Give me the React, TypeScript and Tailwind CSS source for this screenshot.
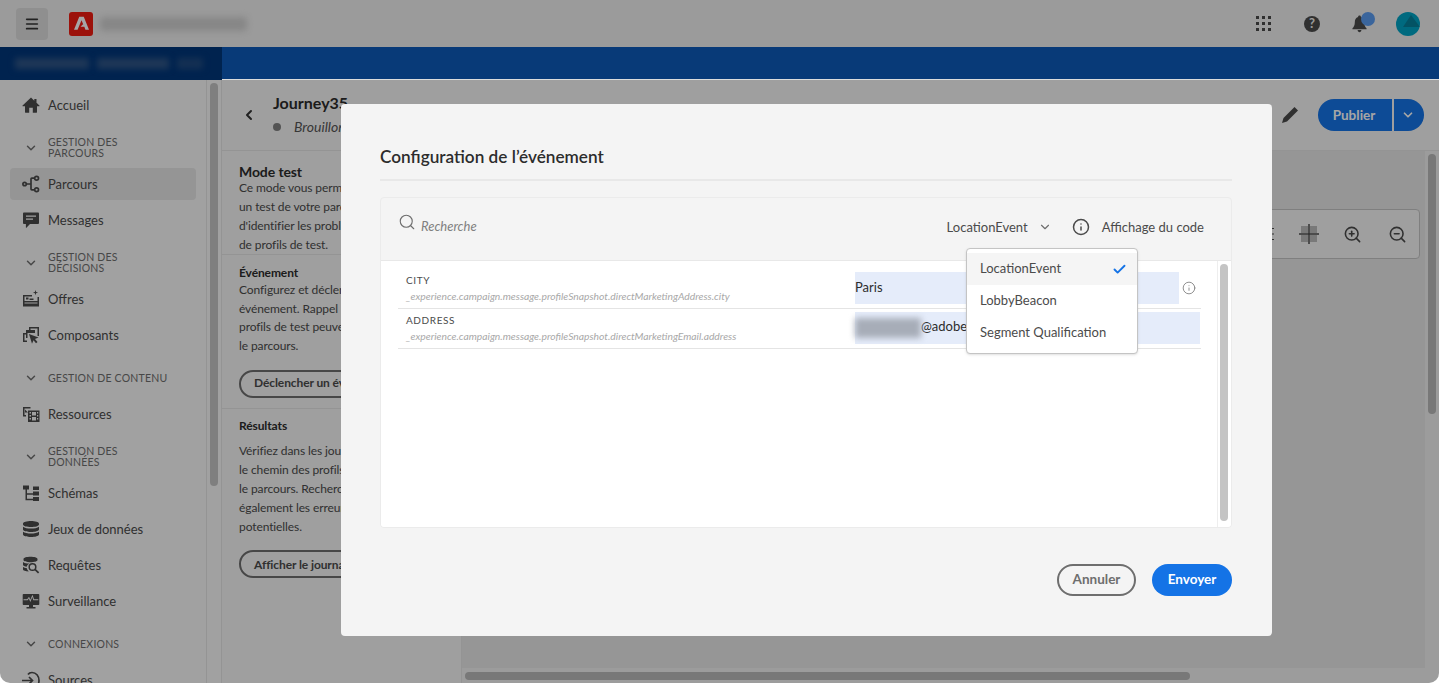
import React from 'react';
import { Check, ChevronDown, ChevronLeft, Info, Menu, Search, ZoomIn, ZoomOut } from 'lucide-react';

const I = ({ d, className = 'w-[18px] h-[18px]' }: { d: React.ReactNode; className?: string }) => (
  <svg viewBox="0 0 18 18" className={className} fill="currentColor">
    {d}
  </svg>
);

const icons: Record<string, React.ReactNode> = {
  home: <path d="M9 1.5 0.6 9.4c-.3.3-.1.8.3.8H3v6c0 .3.2.5.5.5h3.7v-5h3.6v5h3.7c.3 0 .5-.2.5-.5v-6h2.1c.4 0 .6-.5.3-.8L14.5 6.8V3h-2.2v1.7z" />,
  journey: (
    <g fill="none" stroke="currentColor" strokeWidth="1.7">
      <circle cx="2.6" cy="9" r="1.7" />
      <circle cx="14.6" cy="3.2" r="1.9" />
      <circle cx="14.6" cy="14.8" r="1.9" />
      <path d="M4.5 9h4.5M12.6 3.2H9.8c-.5 0-.8.3-.8.8v10c0 .5.3.8.8.8h2.8" />
    </g>
  ),
  message: <path d="M2 1.5h14c.5 0 1 .5 1 1V12c0 .5-.5 1-1 1H8l-3.600 3.800c-.2.2-.5 0-.5-.2V13H2c-.5 0-1-.5-1-1V2.500c0-.5.5-1 1-1zM4 4.500v1.300h10V4.500zM4 7.500v1.300h7V7.500z" fillRule="evenodd" />,
  offers: <path d="M13.500 0l.6 2 2 .6-2 .6-.6 2-.6-2-2-.6 2-.6zM1 5h9v1.500H2.500v4.500h13V7H17v9.500H1zM4 7.500h2.500v2H4zM7.500 8.500h4v1.500h-4zM2.500 12.500h13v1H2.500z" fillRule="evenodd" />,
  components: <path d="M7 1h10v9h-1.500V2.500h-7V4H7zM4 4h9v3H5.500v5H4zM1 7h3v1.500H2.500v6H5V16H1zM7 8l9.500 3.500-3.500 1.500 2.500 3-1.500 1.200-2.500-3-1.500 3.500z" fillRule="evenodd" />,
  resources: <path d="M1 2h7.500v1.500H2.500V10H4v1.500H1zM3 4.500l3 3H3zM6 5.500h11.500v11.500H6zM7.500 7v1.500h1.500V7zM15 7v1.500h1.200V7zM10 7v3.500h4V7zM10 12v3.500h4V12zM7.500 10v1.500h1.500V10zM7.500 13v1.500h1.500V13zM15 10v1.500h1.200V10zM15 13v1.500h1.200V13z" fillRule="evenodd" />,
  schemas: <path d="M1 1.500h6v4H5v3.700h6V7.500h6v4h-6v-.8H5v4.100h6v-1.800h6v4h-6v-.7H3.500V5.500H1zM11 2.500h6v3.500h-6z" />,
  datasets: <path d="M9 1c4 0 8 .9 8 2.700v.8C17 6.200 13 7 9 7S1 6.200 1 4.500v-.8C1 1.900 5 1 9 1zM1 6.700C2.500 8 5.800 8.500 9 8.500s6.500-.5 8-1.800v2.800C17 11.100 13 12 9 12s-8-.9-8-2.500zM1 11.700c1.500 1.200 4.800 1.800 8 1.800s6.500-.6 8-1.800v2.800c0 1.600-4 2.500-8 2.500s-8-.9-8-2.500z" />,
  queries: (
    <g>
      <path d="M8.500 .8c3.600 0 7 .8 7 2.300v1c0 1.400-3.400 2.200-7 2.200s-7-.8-7-2.200v-1C1.500 1.600 4.900.8 8.500.8zM1 6c1.200 1 4 1.500 6.400 1.500-1.500.8-2.500 2-2.700 3.200C3 10.500 1 9.900 1 9zM1 11c.8.5 2.200.9 3.700 1.100.2 1.200 1 2.400 2 3.300C3.500 15.300 1 14.500 1 13.500z" />
      <circle cx="10.500" cy="11" r="3.300" fill="none" stroke="currentColor" strokeWidth="1.500" />
      <path d="M13 13.300l3.600 3.500" stroke="currentColor" strokeWidth="1.700" />
    </g>
  ),
  monitoring: <path d="M1.500 2h15c.4 0 .8.4.8.8v9.400c0 .4-.4.8-.8.8H11v2h2.500v1.500h-9V15H7v-2H1.500c-.4 0-.8-.4-.8-.8V2.800c0-.4.4-.8.8-.8zM1.500 7.200v1h4.200l1.100-1.700 1.600 3.600L10.300 5l1 3.200h5v-1H12L10.500 2.800 8.300 7.800 7 4.800 5.200 7.200z" fillRule="evenodd" />,
  sources: (
    <g fill="none" stroke="currentColor" strokeWidth="1.700">
      <path d="M0 9.500h10M7 6l3.500 3.500L7 13" />
      <path d="M6 3.500C7 2 8.500 1.500 10 1.500c4 0 7 3.400 7 8s-3 7-7 7" />
    </g>
  ),
};

const nav: { type: 'item' | 'group'; label: string; icon?: string; active?: boolean; lines?: number }[] = [
  { type: 'item', label: 'Accueil', icon: 'home' },
  { type: 'group', label: 'GESTION DES PARCOURS', lines: 2 },
  { type: 'item', label: 'Parcours', icon: 'journey', active: true },
  { type: 'item', label: 'Messages', icon: 'message' },
  { type: 'group', label: 'GESTION DES DÉCISIONS', lines: 2 },
  { type: 'item', label: 'Offres', icon: 'offers' },
  { type: 'item', label: 'Composants', icon: 'components' },
  { type: 'group', label: 'GESTION DE CONTENU' },
  { type: 'item', label: 'Ressources', icon: 'resources' },
  { type: 'group', label: 'GESTION DES DONNÉES', lines: 2 },
  { type: 'item', label: 'Schémas', icon: 'schemas' },
  { type: 'item', label: 'Jeux de données', icon: 'datasets' },
  { type: 'item', label: 'Requêtes', icon: 'queries' },
  { type: 'item', label: 'Surveillance', icon: 'monitoring' },
  { type: 'group', label: 'CONNEXIONS' },
  { type: 'item', label: 'Sources', icon: 'sources' },
];

const Sidebar = () => (
  <aside className="w-[222px] shrink-0 flex bg-[#f7f7f7] border-r border-[#e4e4e4]">
    <div className="w-[207px] shrink-0 border-r border-[#e4e4e4] pt-[9px] pl-[10px] pr-[10px] overflow-hidden">
      {nav.map((n) =>
        n.type === 'item' ? (
          <div
            key={n.label}
            className={`h-8 mb-1 w-[186px] shrink-0 flex items-center gap-[8px] pl-[12px] rounded text-[13px] text-[#4b4b4b] ${
              n.active ? 'bg-[#e5e5e5]' : ''
            }`}
          >
            <span className="text-[#4b4b4b]">
              <I d={icons[n.icon!]} />
            </span>
            <span className="pt-[2px]">{n.label}</span>
          </div>
        ) : (
          <div key={n.label} className="h-[39px] mb-1 flex items-center pt-[7px] pl-[14px] text-[#6e6e6e]">
            <ChevronDown className="w-[14px] h-[14px] mr-[10px] shrink-0" strokeWidth={2.500} />
            <span className={`text-[10.500px] leading-[11px] tracking-[0.2px] ${n.lines ? 'w-[90px]' : 'whitespace-nowrap'}`}>{n.label}</span>
          </div>
        )
      )}
    </div>
    <div className="w-[14px] pl-[3px] pt-[3px]">
      <div className="w-[8px] h-[403px] rounded bg-[#c4c4c4]"></div>
    </div>
  </aside>
);

const TopBars = () => (
  <>
    <header className="h-[47px] bg-[#eeeeee] flex items-center pl-4 pr-[19px] shrink-0">
      <div className="w-8 h-8 rounded bg-[#dcdcdc] flex items-center justify-center text-[#333]">
        <Menu className="w-[16px] h-[16px]" strokeWidth={2.500} />
      </div>
      <div className="ml-[21px] w-[24px] h-[24px] rounded-[3px] bg-[#f01c12] flex items-center justify-center">
        <svg viewBox="0 0 18 18" className="w-[15px] h-[15px]" fill="#fff">
          <path d="M6.300 1h5.400L18 16.500h-4.300l-1.300-3.500H7.800l2.700-2.800h.6L9 5 4.300 16.500H0z" />
        </svg>
      </div>
      <div className="ml-[7px] w-[147px] h-[14px] rounded bg-[#cfcfcf] blur-[3px]"></div>
      <div className="ml-auto flex items-center text-[#4b4b4b]">
        <svg viewBox="0 0 16 16" className="w-[16px] h-[16px]" fill="currentColor">
          {[1, 7, 13].flatMap((y) =>
            [1, 7, 13].map((x) => <rect key={`${x}-${y}`} x={x - 1} y={y - 1} width="3" height="3" />)
          )}
        </svg>
        <div className="ml-[32px] w-[16px] h-[16px] rounded-full bg-[#4b4b4b] flex items-center justify-center text-[#eeeeee] text-[13px] font-bold leading-none">?</div>
        <div className="ml-[32px] relative">
          <svg viewBox="0 0 16 18" className="w-[15px] h-[18px]" fill="currentColor">
            <path d="M8 0c1 0 1.500.7 1.500 1.500C12 2.300 13 4.500 13 7c0 3 1 5 2.500 6.500V14.500H.5v-1C2 12 3 10 3 7c0-2.500 1-4.700 3.500-5.500C6.500.7 7 0 8 0zM6 15.500h4c0 1.400-1 2.200-2 2.200s-2-.8-2-2.200z" />
          </svg>
          <span className="absolute -top-[3px] left-[9px] w-[14px] h-[14px] rounded-full bg-[#5a9bf0]"></span>
        </div>
        <div className="ml-[29px] w-[24px] h-[24px] rounded-full bg-[#00a3c4] overflow-hidden relative">
          <span className="absolute left-[7px] top-[3px] w-0 h-0 border-l-[8px] border-r-[9px] border-b-[12px] border-l-transparent border-r-transparent border-b-[#05809a]"></span>
        </div>
      </div>
    </header>
    <div className="h-[33px] shrink-0 bg-[#0d5ab8] flex">
      <div className="w-[222px] bg-[#00367a] flex items-center pl-[15px] gap-[8px]">
        <div className="w-[74px] h-[11px] bg-[#2f5586] blur-[3px]"></div>
        <div className="w-[72px] h-[11px] bg-[#2f5586] blur-[3px]"></div>
        <div className="w-[26px] h-[11px] bg-[#1f4a80] blur-[3px]"></div>
      </div>
    </div>
  </>
);

const MainArea = () => (
  <main className="flex-1 min-w-0 flex flex-col bg-[#f4f4f4]">
    <div className="h-[71px] shrink-0 flex items-center border-b border-[#e4e4e4] pl-[19px] pr-[15px]">
      <ChevronLeft className="w-[16px] h-[16px] text-[#333]" strokeWidth={3} />
      <div className="ml-[16px] -mt-px">
        <div className="text-[16px] leading-[20px] font-bold text-[#2c2c2c] mt-[1px]">Journey35</div>
        <div className="flex items-center mt-[3px] text-[14px] italic text-[#555]">
          <span className="w-[8px] h-[8px] rounded-full bg-[#808080] mr-[13px]"></span>
          Brouillon
        </div>
      </div>
      <div className="ml-auto flex items-center">
        <svg viewBox="0 0 18 18" className="w-[18px] h-[18px] text-[#4b4b4b]" fill="currentColor">
          <path d="M13.500 1l3.500 3.500L6 15.500 1 17l1.500-5z" />
        </svg>
        <div className="ml-[19px] w-[74px] h-[32px] rounded-l-full bg-[#1473e6] text-white text-[13.500px] font-bold flex items-center justify-center pr-[2px]">Publier</div>
        <div className="ml-[2px] w-[30px] h-[32px] rounded-r-full bg-[#1473e6] flex items-center justify-center text-white pr-[2px]">
          <ChevronDown className="w-[14px] h-[14px]" strokeWidth={3} />
        </div>
      </div>
    </div>
    <div className="flex-1 flex min-h-0">
      <section className="w-[240px] shrink-0 border-r border-[#e4e4e4] whitespace-nowrap overflow-hidden text-[12px] leading-[19px] tracking-[-0.1px] text-[#4b4b4b]">
        <div className="pl-[17px] pt-[12px] h-[104px] border-b border-[#e4e4e4]">
          <h2 className="text-[14px] leading-[18px] font-bold text-[#2c2c2c] mb-[-3px]">Mode test</h2>
          <p>Ce mode vous permet d&apos;effectuer</p>
          <p>un test de votre parcours et</p>
          <p>d&apos;identifier les problèmes</p>
          <p>de profils de test.</p>
        </div>
        <div className="pl-[17px] pt-[9px] h-[154px] border-b border-[#e4e4e4] leading-[18.700px]">
          <h3 className="text-[12px] leading-[18px] font-bold text-[#2c2c2c] mb-[-1px]">Événement</h3>
          <p>Configurez et déclenchez un</p>
          <p>événement. Rappel : seuls les</p>
          <p>profils de test peuvent accéder</p>
          <p>le parcours.</p>
          <div className="mt-[14px] w-[160px] h-[28px] rounded-full border-2 border-[#6e6e6e] font-bold text-[#4b4b4b] pl-[13px] flex items-center">Déclencher un événement</div>
        </div>
        <div className="pl-[17px] pt-[8px]">
          <h3 className="text-[12px] leading-[18px] font-bold text-[#2c2c2c] mb-[6px]">Résultats</h3>
          <p>Vérifiez dans les journaux</p>
          <p>le chemin des profils dans</p>
          <p>le parcours. Recherchez</p>
          <p>également les erreurs</p>
          <p>potentielles.</p>
          <div className="mt-[14px] w-[160px] h-[28px] rounded-full border-2 border-[#6e6e6e] font-bold text-[#4b4b4b] pl-[13px] flex items-center">Afficher le journal</div>
        </div>
      </section>
      <div className="flex-1 min-w-0 flex flex-col">
        <div className="flex-1 flex min-h-0">
          <div className="flex-1 bg-[#e6e6e6] relative">
            <div className="absolute right-[5px] top-[58px] w-[500px] h-[50px] rounded border border-[#c4c4c4] bg-[#f5f5f5] flex items-center justify-end text-[#4b4b4b] pr-[12px]">
              <svg viewBox="0 0 4 14" className="w-[4px] h-[14px] mr-[24px]" fill="none" stroke="currentColor" strokeWidth="1.200">
                <path d="M0 1.500h3M0 7h3M0 12.500h3" />
              </svg>
              <svg viewBox="0 0 20 20" className="w-[20px] h-[20px] mr-[24px]">
                <rect x="2" y="2" width="7" height="7" fill="#bbb" />
                <rect x="11" y="2" width="7" height="7" fill="#bbb" />
                <rect x="2" y="11" width="7" height="7" fill="#bbb" />
                <rect x="11" y="11" width="7" height="7" fill="#bbb" />
                <path d="M10 0v20M0 10h20" stroke="#4b4b4b" strokeWidth="1.500" />
              </svg>
              <ZoomIn className="w-[19px] h-[19px] mr-[26px]" strokeWidth={2} />
              <ZoomOut className="w-[19px] h-[19px]" strokeWidth={2} />
            </div>
          </div>
          <div className="w-[14px] bg-[#f0f0f0] pl-[3px] pt-[3px]">
            <div className="w-[8px] h-[260px] rounded bg-[#b8b8b8]"></div>
          </div>
        </div>
        <div className="h-[15px] shrink-0 bg-[#f0f0f0] pt-[4px] pl-[3px]">
          <div className="h-[8px] w-[725px] rounded bg-[#b8b8b8]"></div>
        </div>
      </div>
    </div>
  </main>
);

const Field = ({ label, path, children }: { label: string; path: string; children: React.ReactNode }) => (
  <div className="h-[40px] border-b border-[#e4e4e4] flex pl-[8px] pt-[3px]">
    <div className="w-[449px] shrink-0 pt-[1px]">
      <div className="text-[10px] leading-[14px] tracking-[0.6px] text-[#4b4b4b]">{label}</div>
      <div className="text-[10.300px] leading-[14px] mt-[2px] italic text-[#a8a8a8]">{path}</div>
    </div>
    {children}
  </div>
);

const EventDialog = () => (
  <div className="absolute left-[341px] top-[104px] w-[931px] h-[532px] rounded bg-[#f4f4f4] pt-[41px] pl-[39px] pr-[40px] flex flex-col">
    <h1 className="text-[17.200px] leading-[24px] font-semibold text-[#2c2c2c] h-[36px] border-b-2 border-[#e8e8e8]">Configuration de l’événement</h1>
    <div className="mt-[16px] h-[331px] rounded border border-[#ebebeb] flex flex-col overflow-hidden">
      <div className="h-[63px] shrink-0 border-b border-[#e8e8e8] flex items-start pl-[17px] pr-[27px] pt-[15px]">
        <Search className="w-[18px] h-[18px] text-[#6e6e6e]" strokeWidth={1.500} />
        <span className="ml-[5px] mt-[3px] text-[13px] leading-[20px] italic text-[#808080]">Recherche</span>
        <div className="ml-auto flex items-center mt-[4px] text-[13px] leading-[20px] text-[#4b4b4b]">
          <span>LocationEvent</span>
          <ChevronDown className="ml-[10px] w-[14px] h-[14px] text-[#6e6e6e]" strokeWidth={2} />
          <Info className="ml-[20px] w-[18px] h-[18px]" strokeWidth={2} />
          <span className="ml-[12px]">Affichage du code</span>
        </div>
      </div>
      <div className="flex-1 flex bg-white min-h-0">
        <div className="flex-1 pt-[8px] pl-[17px] pr-[16px]">
          <Field label="CITY" path="_experience.campaign.message.profileSnapshot.directMarketingAddress.city">
            <div className="w-[324px] h-[32px] bg-[#e5ecfa] text-[13px] leading-[30px] text-[#2c2c2c]">Paris</div>
            <Info className="ml-[3px] mt-[9px] w-[14px] h-[14px] text-[#808080]" strokeWidth={1.500} />
          </Field>
          <Field label="ADDRESS" path="_experience.campaign.message.profileSnapshot.directMarketingEmail.address">
            <div className="w-[345px] h-[32px] bg-[#e5ecfa] text-[13px] text-[#2c2c2c] flex items-center">
              <span className="w-[66px] h-[20px] bg-[#a7adb8] blur-[3px] shrink-0"></span>
              <span className="pb-[2px]">@adobe.com</span>
            </div>
          </Field>
        </div>
        <div className="w-[14px] shrink-0 border-l border-[#eeeeee] pl-[2px] pt-[3px]">
          <div className="w-[8px] h-[257px] rounded bg-[#c4c4c4]"></div>
        </div>
      </div>
    </div>
    <div className="mt-[36px] flex justify-end gap-[16px]">
      <div className="w-[79px] h-[32px] rounded-full border-2 border-[#6e6e6e] text-[13.500px] font-bold text-[#6e6e6e] flex items-center justify-center pb-[2px]">Annuler</div>
      <div className="w-[80px] h-[32px] rounded-full bg-[#1473e6] text-[13.500px] font-bold text-white flex items-center justify-center pb-[2px]">Envoyer</div>
    </div>
    <div className="absolute left-[625px] top-[144px] w-[172px] h-[106px] rounded border border-[#c4c4c4] bg-white shadow-sm py-[4px] text-[13px] text-[#4b4b4b]">
      <div className="h-[32px] bg-[#f5f5f5] flex items-center pl-[13px] pr-[10px]">
        LocationEvent
        <Check className="ml-auto w-[15px] h-[15px] text-[#1473e6]" strokeWidth={3} />
      </div>
      <div className="h-[32px] flex items-center pl-[13px]">LobbyBeacon</div>
      <div className="h-[32px] flex items-center pl-[13px]">Segment Qualification</div>
    </div>
  </div>
);

export default function App() {
  return (
    <div className="relative w-[1439px] h-[683px] overflow-hidden flex flex-col font-['Lato','Noto_Sans',sans-serif] rounded-b-[10px]">
      <TopBars />
      <div className="flex-1 flex min-h-0">
        <Sidebar />
        <MainArea />
      </div>
      <div className="absolute inset-0 bg-black/35"></div>
      <div className="absolute left-[222px] right-0 top-[79px] h-px bg-[#dcdcdc]"></div>
      <EventDialog />
    </div>
  );
}
